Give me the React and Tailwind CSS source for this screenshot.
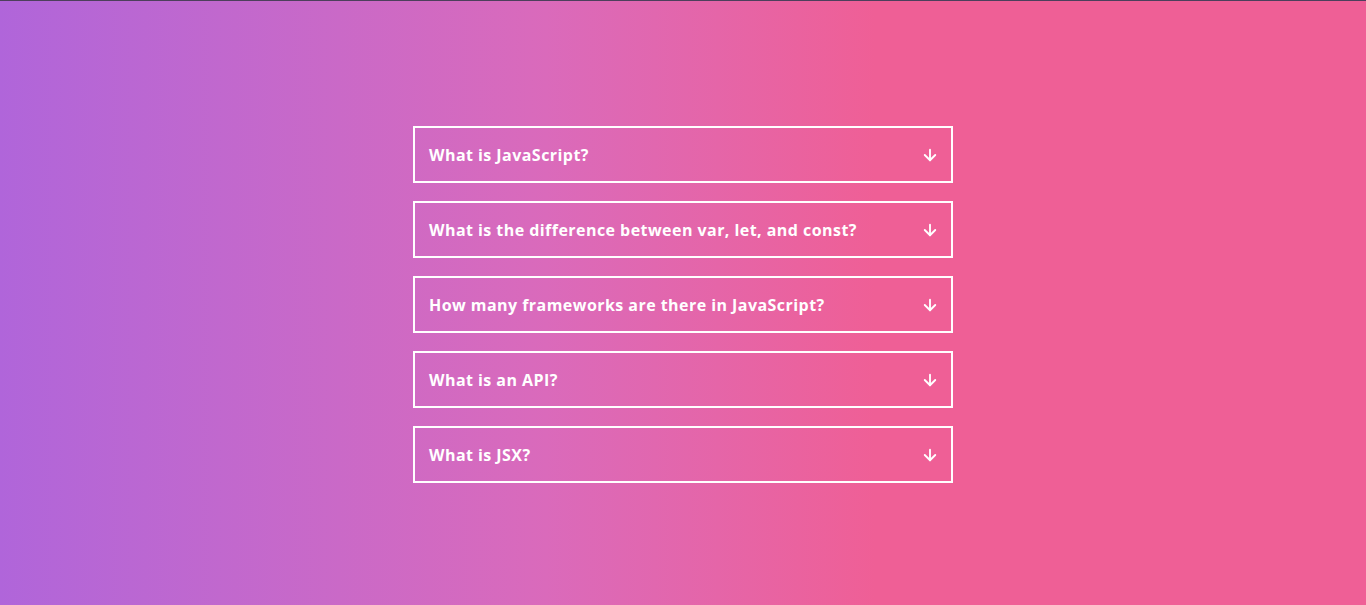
import { ArrowDown } from 'lucide-react';

const questions = [
  'What is JavaScript?',
  'What is the difference between var, let, and const?',
  'How many frameworks are there in JavaScript?',
  'What is an API?',
  'What is JSX?',
];

export default function App() {
  return (
    <div className="min-h-[605px] border-t border-[#4d3f5c] bg-linear-to-r from-[#b065da] via-[#da6abb] via-40% to-[#ef5f96] to-64% flex justify-center pt-[125px] font-['Open_Sans',sans-serif]">
      <div className="w-[540px] flex flex-col gap-[18px]">
        {questions.map((q) => (
          <button
            key={q}
            type="button"
            className="h-[57px] border-2 border-white flex items-center justify-between pl-[14px] pr-[12px] pt-[1px] text-left text-white"
          >
            <span className="text-[16px] font-bold tracking-[0.45px]">{q}</span>
            <ArrowDown size={18} strokeWidth={2.5} />
          </button>
        ))}
      </div>
    </div>
  );
}
